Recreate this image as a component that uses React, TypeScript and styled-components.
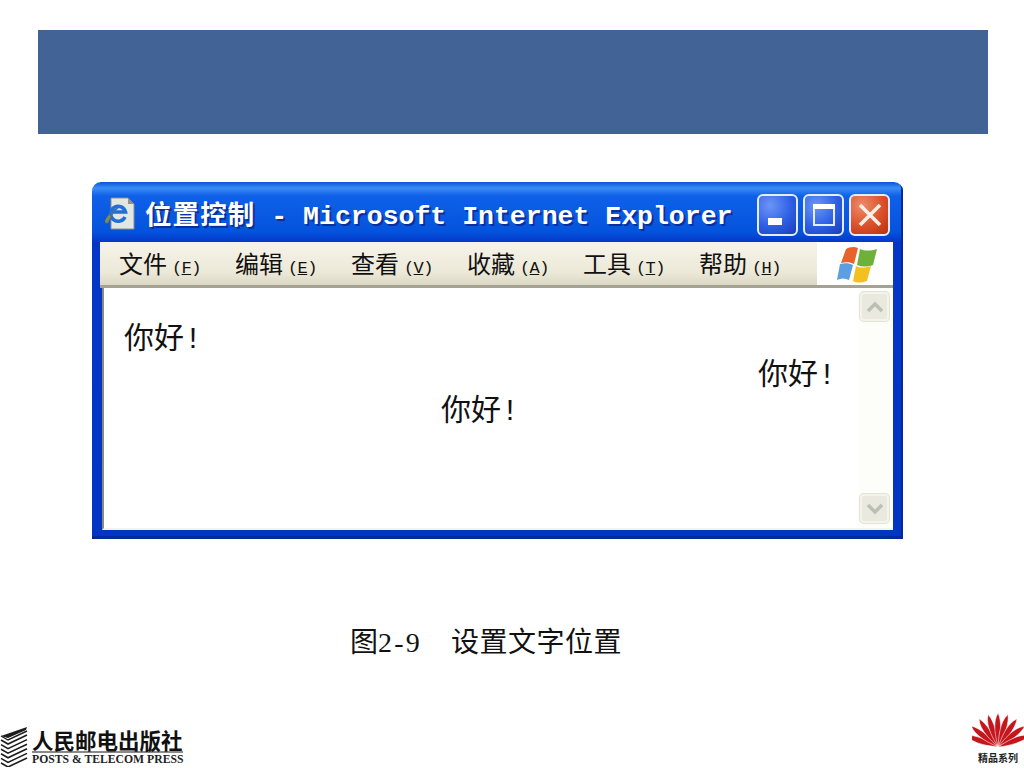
import styled, { createGlobalStyle } from "styled-components";

const menuItems = [
  { label: "文件", key: "F" },
  { label: "编辑", key: "E" },
  { label: "查看", key: "V" },
  { label: "收藏", key: "A" },
  { label: "工具", key: "T" },
  { label: "帮助", key: "H" },
];

const CJK = `"Noto Sans CJK SC", sans-serif`;
const MONO_CJK = `"Liberation Mono", "Noto Sans CJK SC", monospace`;

export default function App() {
  return (
    <>
      <GlobalStyle />
      <Slide>
        <Banner />
        <Window>
          <TitleBar>
            <IeIcon />
            <Title>
              <TitleCjk>位置控制</TitleCjk> - Microsoft Internet Explorer
            </Title>
            <CaptionButtons>
              <CaptionButton>
                <Minimize />
              </CaptionButton>
              <CaptionButton>
                <Maximize />
              </CaptionButton>
              <CaptionButton $close>
                <CloseGlyph />
              </CaptionButton>
            </CaptionButtons>
          </TitleBar>
          <MenuBar>
            <MenuItems>
              {menuItems.map(({ label, key }) => (
                <MenuItem key={key}>
                  {label}
                  <MenuKey>
                    (<u>{key}</u>)
                  </MenuKey>
                </MenuItem>
              ))}
            </MenuItems>
            <BrandBox>
              <WindowsFlag />
            </BrandBox>
          </MenuBar>
          <Body>
            <Page>
              <Hello $align="left">你好!</Hello>
              <Hello $align="right">你好!</Hello>
              <Hello $align="center">你好!</Hello>
            </Page>
            <ScrollBar>
              <ScrollButton>
                <Chevron $up />
              </ScrollButton>
              <ScrollButton>
                <Chevron />
              </ScrollButton>
            </ScrollBar>
          </Body>
        </Window>
        <Caption>
          图<Digits>2-9</Digits>
          <CaptionText>设置文字位置</CaptionText>
        </Caption>
        <Footer>
          <Publisher>
            <BooksLogo />
            <PublisherText>
              <PublisherName>人民邮电出版社</PublisherName>
              <PublisherLatin>POSTS &amp; TELECOM PRESS</PublisherLatin>
            </PublisherText>
          </Publisher>
          <Series>
            <FanLogo />
            <SeriesName>精品系列</SeriesName>
          </Series>
        </Footer>
      </Slide>
    </>
  );
}

function IeIcon() {
  return (
    <IconSvg width="32" height="33" viewBox="0 0 32 33">
      <path d="M7 1h17l6 6v25H7z" fill="#e4e6e2" stroke="#8d8f88" />
      <path d="M24 1v6h6z" fill="#8f918a" />
      <path
        d="M21 20a7.5 7.5 0 1 1 .5-5H9"
        fill="none"
        stroke="#1f6fd6"
        strokeWidth="3.5"
      />
      <path d="M1 25C3 17 11 10 19 8 11 13 7 19 5 25c-1 2-4 2-4 0z" fill="#3f6fb0" />
      <path d="M1 25c0-2 2-5 4-7l2 2c-2 2-3 4-3 6z" fill="#8e8a3e" />
    </IconSvg>
  );
}

function Minimize() {
  return (
    <svg width="24" height="24" viewBox="0 0 24 24">
      <rect x="2" y="15" width="14" height="7" fill="#fff" />
    </svg>
  );
}

function Maximize() {
  return (
    <svg width="24" height="24" viewBox="0 0 24 24">
      <rect x="2" y="2" width="20" height="20" fill="none" stroke="#e6edff" strokeWidth="2" />
      <rect x="1" y="1" width="22" height="5" fill="#fff" />
    </svg>
  );
}

function CloseGlyph() {
  return (
    <svg width="24" height="24" viewBox="0 0 24 24">
      <path d="M2 2l20 20M22 2L2 22" stroke="#fdeee6" strokeWidth="3.6" />
    </svg>
  );
}

function WindowsFlag() {
  return (
    <svg width="40" height="38" viewBox="0 0 40 38">
      <path d="M9 4c3-2 8-3 12-1l-4 16c-4-2-8-2-13-1z" fill="#e8622c" />
      <path d="M23 4c5 2 10 2 17 0l-4 16c-6 2-11 2-16 0z" fill="#6fb03a" />
      <path d="M3 19c5-1 9-1 13 1l-4 15c-4-2-8-2-12 0z" fill="#5a9fdf" />
      <path d="M19 21c4 2 9 2 15 0l-4 15c-5 2-10 2-14 0z" fill="#f3c021" />
    </svg>
  );
}

function Chevron({ $up }: { $up?: boolean }) {
  return (
    <svg width="18" height="12" viewBox="0 0 18 12">
      <path
        d={$up ? "M2 10l7-7 7 7" : "M2 2l7 7 7-7"}
        fill="none"
        stroke="#bcc0b4"
        strokeWidth="3.5"
      />
    </svg>
  );
}

function BooksLogo() {
  const rows = [0, 1, 2, 3, 4, 5];
  return (
    <svg width="29" height="40" viewBox="0 0 29 40">
      <path d="M1 9L27 0l-1 3L8 11z" fill="#1c1c1c" />
      <path d="M1 9l7 4 19-9" fill="none" stroke="#1c1c1c" strokeWidth="1.4" />
      {rows.map((i) => (
        <path
          key={i}
          d={`M1 ${13 + i * 4.6}l7 4 19-9`}
          fill="none"
          stroke="#1c1c1c"
          strokeWidth="1.6"
        />
      ))}
    </svg>
  );
}

function FanLogo() {
  const angles = [-70, -52, -34, -17, 0, 17, 34, 52, 70];
  return (
    <svg width="52" height="36" viewBox="0 0 52 36">
      {angles.map((angle) => (
        <path
          key={angle}
          d="M26 35C24 26 20 11 26 1c4 8 3 23 0 34z"
          fill="#c5161d"
          stroke="#fff"
          strokeWidth="0.5"
          transform={`rotate(${angle} 26 35)`}
        />
      ))}
    </svg>
  );
}

const GlobalStyle = createGlobalStyle`
  html, body {
    margin: 0;
    padding: 0;
    background: #fff;
  }

  body {
    font-family: ${CJK};
  }
`;

const Slide = styled.div`
  width: 1024px;
  height: 768px;
  padding-top: 30px;
  box-sizing: border-box;
  display: flex;
  flex-direction: column;
  overflow: hidden;
`;

const Banner = styled.div`
  height: 104px;
  margin: 0 36px 0 38px;
  background: #426395;
`;

const Window = styled.div`
  width: 811px;
  height: 357px;
  box-sizing: border-box;
  margin: 48px 0 0 92px;
  padding: 0 10px 9px 8px;
  border-radius: 9px 9px 0 0;
  background: linear-gradient(
    to bottom,
    #0a55d8 0,
    #3a8cf5 6px,
    #0f60e8 14px,
    #0453dc 50px,
    #0437c8 60px,
    #0335c4 100%
  );
  box-shadow: inset -2px -3px 0 #022a9e;
  display: flex;
  flex-direction: column;
`;

const TitleBar = styled.div`
  height: 60px;
  flex-shrink: 0;
  display: flex;
  align-items: center;
  padding-left: 4px;
  box-sizing: border-box;
`;

const IconSvg = styled.svg`
  flex-shrink: 0;
  margin-top: 2px;
`;

const Title = styled.div`
  flex: 1;
  margin: 10px 0 0 9px;
  color: #fff;
  font-family: ${MONO_CJK};
  font-size: 26.5px;
  font-weight: 700;
  line-height: 30px;
  white-space: pre;
  text-shadow: 2px 2px 0 #0a2f9c;
`;

const TitleCjk = styled.span`
  letter-spacing: 1.1px;
`;

const CaptionButtons = styled.div`
  display: flex;
  gap: 5px;
  margin: 6px 3px 0 0;
`;

const CaptionButton = styled.div<{ $close?: boolean }>`
  width: 41px;
  height: 42px;
  box-sizing: border-box;
  border: 2px solid #e4ecff;
  border-radius: 6px;
  display: flex;
  align-items: center;
  justify-content: center;
  background: ${({ $close }) =>
    $close
      ? "radial-gradient(circle at 30% 25%, #ee8c68, #d9502a 55%, #b8300e)"
      : "radial-gradient(circle at 30% 25%, #6d95f5, #2d5fe6 55%, #1a3cb8)"};
`;

const MenuBar = styled.div`
  height: 46px;
  flex-shrink: 0;
  box-sizing: border-box;
  display: flex;
  border-bottom: 3px solid #a5a294;
  background: #ece9d8;
`;

const MenuItems = styled.div`
  flex: 1;
  display: flex;
  padding-left: 19px;
  background: linear-gradient(to bottom, #f6f4ea, #ece9d8 70%, #dcd8c6);
`;

const MenuItem = styled.div`
  width: 116px;
  color: #111;
  font-family: ${CJK};
  font-size: 24px;
  line-height: 42px;
  white-space: nowrap;
`;

const MenuKey = styled.span`
  margin-left: 5px;
  font-family: "Liberation Mono", monospace;
  font-size: 17px;
  letter-spacing: -0.6px;
`;

const BrandBox = styled.div`
  width: 76px;
  background: #fff;
  display: flex;
  align-items: center;
  justify-content: center;
  padding-left: 3px;
  box-sizing: border-box;
`;

const Body = styled.div`
  flex: 1;
  min-height: 0;
  display: flex;
  margin-left: 2px;
  border-left: 2px solid #8a8a7e;
  border-bottom: 2px solid #f4f4ea;
  background: #fff;
`;

const Page = styled.div`
  flex: 1;
  padding: 34px 22px 0 20px;
`;

const Hello = styled.div<{ $align: "left" | "right" | "center" }>`
  color: #111;
  font-family: ${MONO_CJK};
  font-size: 30px;
  line-height: 36px;
  text-align: ${({ $align }) => $align};
`;

const ScrollBar = styled.div`
  width: 35px;
  box-sizing: border-box;
  padding: 4px 4px 5px 2px;
  background: #fdfdf9;
  display: flex;
  flex-direction: column;
  justify-content: space-between;
`;

const ScrollButton = styled.div`
  height: 29px;
  box-sizing: border-box;
  border: 2px solid #f4f4ea;
  border-radius: 4px;
  background: #e9e9df;
  box-shadow: 0 0 0 1px #e2e2d6;
  display: flex;
  align-items: center;
  justify-content: center;
`;

const Caption = styled.div`
  margin: 81px 0 0 350px;
  color: #111;
  font-family: ${CJK};
  font-size: 28px;
  line-height: 40px;
  display: flex;
  align-items: baseline;
  white-space: nowrap;
`;

const Digits = styled.span`
  font-family: "Liberation Serif", serif;
  font-size: 28px;
  letter-spacing: 2.2px;
`;

const CaptionText = styled.span`
  margin-left: 29px;
  letter-spacing: 0.5px;
`;

const Footer = styled.div`
  flex: 1;
  display: flex;
  justify-content: space-between;
  align-items: flex-end;
`;

const Publisher = styled.div`
  display: flex;
  align-items: flex-end;
  gap: 3px;
  margin-bottom: 1px;
`;

const PublisherText = styled.div`
  display: flex;
  flex-direction: column;
`;

const PublisherName = styled.div`
  color: #111;
  font-family: ${CJK};
  font-size: 21.5px;
  font-weight: 700;
  line-height: 22px;
  border-bottom: 2px solid #8a8a8a;
  white-space: nowrap;
`;

const PublisherLatin = styled.div`
  color: #222;
  font-family: "Liberation Serif", serif;
  font-size: 11.7px;
  font-weight: 700;
  line-height: 14px;
  white-space: nowrap;
`;

const Series = styled.div`
  width: 52px;
  display: flex;
  flex-direction: column;
  align-items: center;
  margin-bottom: 3px;
`;

const SeriesName = styled.div`
  color: #222;
  font-family: ${CJK};
  font-size: 10px;
  font-weight: 700;
  line-height: 14px;
  margin-top: 3px;
  white-space: nowrap;
`;
